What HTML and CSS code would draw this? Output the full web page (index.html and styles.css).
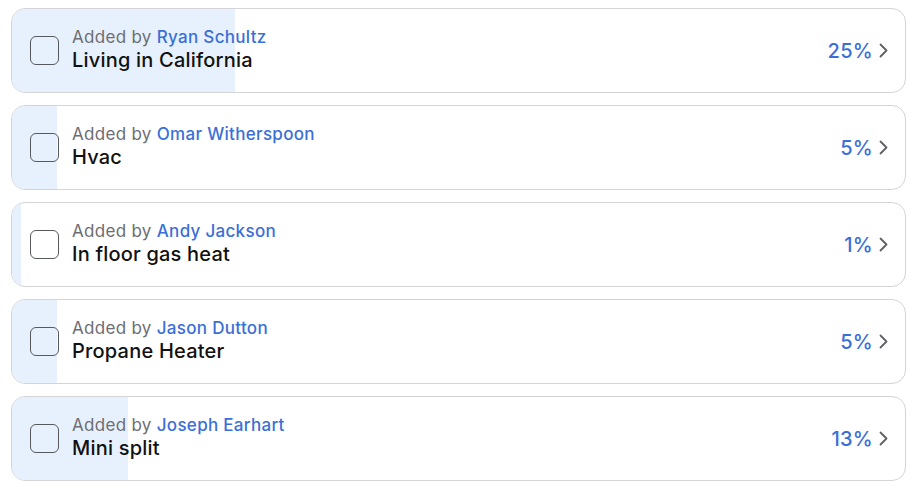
FILE: index.html
```html
<!DOCTYPE html>
<html>
<head>
<meta charset="utf-8">
	<title>Ideas</title>
	<link rel="stylesheet" href="styles.css">
</head>
<body>
	<div class="list">
		<div class="item">
			<div class="fill" style="width: 25%"></div>
			<div class="check"></div>
			<div class="info">
				<div class="by">Added by <span class="name">Ryan Schultz</span></div>
				<div class="title">Living in California</div>
			</div>
			<div class="pct">25%</div>
			<svg class="chev" width="9" height="15" viewBox="0 0 9 15"><path d="M1.5 1.5 L7.5 7.5 L1.5 13.5" /></svg>
		</div>
		<div class="item">
			<div class="fill" style="width: 5%"></div>
			<div class="check"></div>
			<div class="info">
				<div class="by">Added by <span class="name">Omar Witherspoon</span></div>
				<div class="title">Hvac</div>
			</div>
			<div class="pct">5%</div>
			<svg class="chev" width="9" height="15" viewBox="0 0 9 15"><path d="M1.5 1.5 L7.5 7.5 L1.5 13.5" /></svg>
		</div>
		<div class="item">
			<div class="fill" style="width: 1%"></div>
			<div class="check"></div>
			<div class="info">
				<div class="by">Added by <span class="name">Andy Jackson</span></div>
				<div class="title">In floor gas heat</div>
			</div>
			<div class="pct">1%</div>
			<svg class="chev" width="9" height="15" viewBox="0 0 9 15"><path d="M1.5 1.5 L7.5 7.5 L1.5 13.5" /></svg>
		</div>
		<div class="item">
			<div class="fill" style="width: 5%"></div>
			<div class="check"></div>
			<div class="info">
				<div class="by">Added by <span class="name">Jason Dutton</span></div>
				<div class="title">Propane Heater</div>
			</div>
			<div class="pct">5%</div>
			<svg class="chev" width="9" height="15" viewBox="0 0 9 15"><path d="M1.5 1.5 L7.5 7.5 L1.5 13.5" /></svg>
		</div>
		<div class="item">
			<div class="fill" style="width: 13%"></div>
			<div class="check"></div>
			<div class="info">
				<div class="by">Added by <span class="name">Joseph Earhart</span></div>
				<div class="title">Mini split</div>
			</div>
			<div class="pct">13%</div>
			<svg class="chev" width="9" height="15" viewBox="0 0 9 15"><path d="M1.5 1.5 L7.5 7.5 L1.5 13.5" /></svg>
		</div>
	</div>
</body>
</html>
```

FILE: styles.css
```css
body{
	margin: 0px;
	padding: 0px;
	background-color: #ffffff;
	font-family: Inter, "Noto Sans", sans-serif;
}
.list{
	display: flex;
	flex-direction: column;
	gap: 12px;
	padding: 8px 14px 0px 11px;
}
.item{
	position: relative;
	display: flex;
	align-items: center;
	height: 83px;
	border: 1px solid #d4d4d6;
	border-radius: 14px;
	overflow: hidden;
	padding: 0px 17px 0px 18px;
	background-color: #ffffff;
}
.fill{
	position: absolute;
	left: 0px;
	top: 0px;
	bottom: 0px;
	background-color: #e7f1fe;
}
.check{
	position: relative;
	width: 27px;
	height: 27px;
	border: 1.5px solid #58595c;
	border-radius: 6px;
	flex-shrink: 0;
}
.info{
	position: relative;
	flex: 1;
	margin-left: 13px;
	margin-top: -2px;
}
.by{
	font-size: 17px;
	line-height: 22px;
	letter-spacing: 0.3px;
	color: #6d6d72;
}
.name{
	color: #3a6fd7;
	font-weight: 500;
}
.title{
	font-size: 20px;
	line-height: 25px;
	font-weight: 500;
	letter-spacing: 0.2px;
	color: #111111;
}
.pct{
	position: relative;
	font-size: 20px;
	font-weight: 500;
	letter-spacing: 0.3px;
	color: #3a6fd7;
	margin-right: 6px;
}
.chev{
	position: relative;
	fill: none;
	stroke: #5f6064;
	stroke-width: 1.8;
	stroke-linecap: round;
	stroke-linejoin: round;
}
```
